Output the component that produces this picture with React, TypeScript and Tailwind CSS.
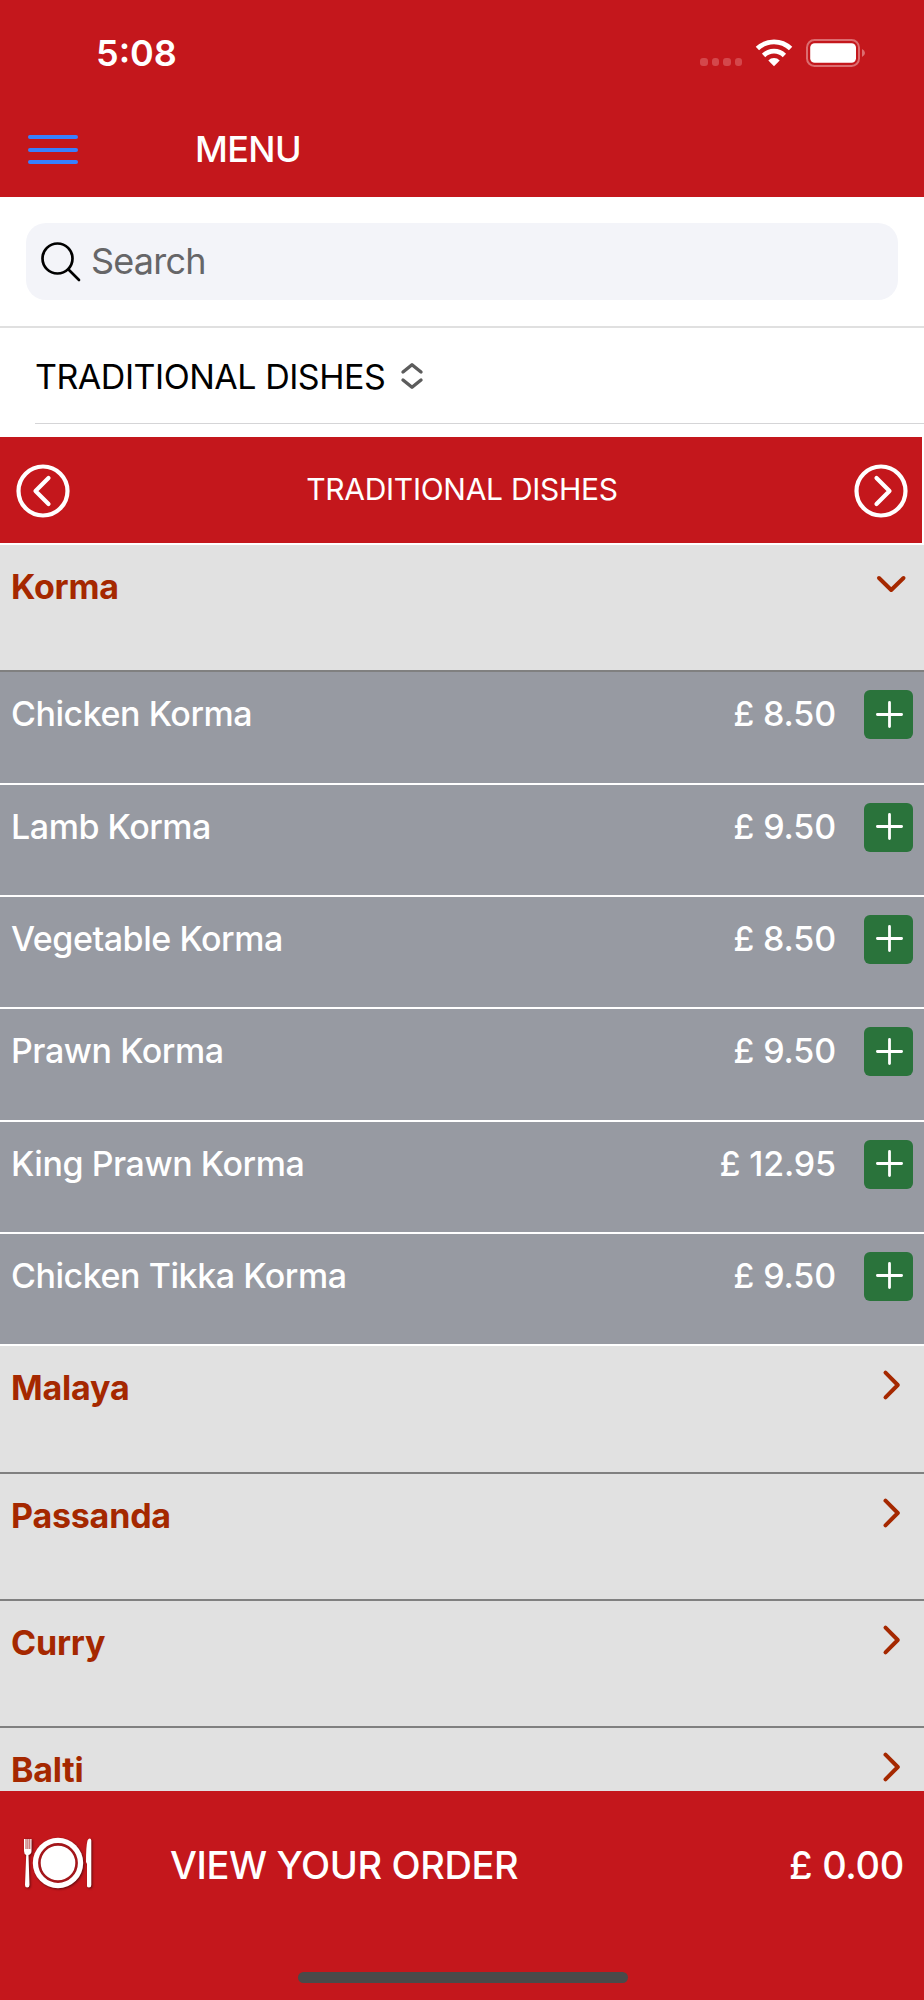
import { useState } from "react";

type Dish = { name: string; price: string };
type Category = { name: string; dishes: Dish[] };

const categories: Category[] = [
    {
        name: "Korma",
        dishes: [
            { name: "Chicken Korma", price: "8.50" },
            { name: "Lamb Korma", price: "9.50" },
            { name: "Vegetable Korma", price: "8.50" },
            { name: "Prawn Korma", price: "9.50" },
            { name: "King Prawn Korma", price: "12.95" },
            { name: "Chicken Tikka Korma", price: "9.50" },
        ],
    },
    { name: "Malaya", dishes: [] },
    { name: "Passanda", dishes: [] },
    { name: "Curry", dishes: [] },
    { name: "Balti", dishes: [] },
];

export default function App() {
    const [opened, setOpened] = useState("Korma");
    const [total, setTotal] = useState(0);

    return (
        <div className="flex h-[2000px] w-[924px] flex-col overflow-hidden bg-white font-['Inter',sans-serif]">
            <StatusBar />

            {/* Header */}
            <header className="flex h-[91px] shrink-0 items-center bg-[#c4171c] pb-[4px] pl-7">
                <button aria-label="Open menu" className="flex w-[50px] flex-col gap-[8.5px]">
                    <span className="h-1 rounded-full bg-[#3880ff]" />
                    <span className="h-1 rounded-full bg-[#3880ff]" />
                    <span className="h-1 rounded-full bg-[#3880ff]" />
                </button>
                <h1 className="mb-0.5 ml-[117px] text-[36px] leading-none font-[550] tracking-[-0.6px] text-white">MENU</h1>
            </header>

            {/* Search */}
            <div className="h-[131px] shrink-0 border-b-2 border-[#e0e0e0] px-[26px] pt-[26px]">
                <label className="flex h-[77px] items-center gap-3 rounded-[20px] bg-[#f3f4f9] pl-[15px]">
                    <svg className="shrink-0" width="40" height="40" viewBox="0 0 40 40" fill="none" stroke="#000" strokeWidth="2.7" strokeLinecap="round">
                        <circle cx="16.5" cy="16.5" r="15" />
                        <path d="M27.5 27.5 38 38" />
                    </svg>
                    <input
                        placeholder="Search"
                        className="mb-px -ml-[2px] w-full bg-transparent text-[36px] tracking-[-0.8px] outline-none placeholder:text-[#666668]"
                    />
                </label>
            </div>

            {/* Section select */}
            <div className="h-[109px] shrink-0 pl-[35px]">
                <button className="flex h-[96px] w-full items-center border-b border-[#d5d5d7] pt-px text-[34px] tracking-[-0.48px] text-black">
                    TRADITIONAL DISHES
                    <svg className="ml-[15px]" width="24" height="30" viewBox="0 0 24 30" fill="none" stroke="#5c5c5c" strokeWidth="3.4" strokeLinecap="round" strokeLinejoin="round">
                        <path d="M3 11 12 3.7 21 11M3 19 12 26.3 21 19" />
                    </svg>
                </button>
            </div>

            <div className="mr-[2px] mb-[2px] flex h-[106px] shrink-0 items-center justify-between bg-[#c4171c] pt-0.5 pr-[12px] pl-[14px] text-white">
                <CircleArrow d="M34.5 16 21.5 29 34.5 42" />
                <span className="pb-1 text-[30px] tracking-[-0.28px]">TRADITIONAL DISHES</span>
                <CircleArrow d="M24.5 16 37.5 29 24.5 42" />
            </div>

            {/* Dish list */}
            <main className="min-h-0 flex-1 overflow-hidden">
                {categories.map((category) => (
                    <section key={category.name}>
                        <button
                            onClick={() => setOpened(opened === category.name ? "" : category.name)}
                            className="flex h-[127.4px] w-full items-start justify-between border-b-2 border-[#808080] bg-[#e1e1e1] pt-[18px] pr-[14px] pl-[11px] text-[#a52800]"
                        >
                            <span className="text-[34px] leading-[48px] font-bold tracking-[-0.2px]">{category.name}</span>
                            <svg width="38" height="42" viewBox="0 0 38 42" fill="none" stroke="currentColor" strokeWidth="4" strokeLinecap="round" strokeLinejoin="round">
                                <path d={opened === category.name ? "M7 15 19.2 27 31.5 15" : "M13.5 8.7 25.8 21 13.5 33.3"} />
                            </svg>
                        </button>
                        {opened === category.name &&
                            category.dishes.map((dish) => (
                                <DishRow key={dish.name} dish={dish} onAdd={() => setTotal(total + Number(dish.price))} />
                            ))}
                    </section>
                ))}
            </main>

            {/* Order bar */}
            <footer className="flex h-[209.5px] shrink-0 flex-col items-center justify-between bg-[#c4171c] pb-[17px] text-white">
                <button className="flex w-full items-center pt-[42px] pr-5 pl-[22px] text-[38px]">
                    <PlateIcon />
                    <span className="mt-1 ml-[76px] font-[450] tracking-[-0.4px]">VIEW YOUR ORDER</span>
                    <span className="mt-1 ml-auto font-[450] tracking-[-0.3px]">£ {total.toFixed(2)}</span>
                </button>
                <div className="ml-px h-[11px] w-[330px] rounded-full bg-[#4a4a4a]" />
            </footer>
        </div>
    );
}

function DishRow({ dish, onAdd }: { dish: Dish; onAdd: () => void }) {
    return (
        <div className="flex h-[112.3px] items-start border-b-2 border-white bg-[#979aa2] pt-[18px] pr-[11px] pl-[11px] text-[34px] leading-[48px] font-[450] text-white">
            <span className="tracking-[-0.45px]">{dish.name}</span>
            <span className="ml-auto tracking-[-0.15px]">£ {dish.price}</span>
            <button onClick={onAdd} aria-label="Add" className="ml-[28px] flex size-[49px] items-center justify-center rounded-md bg-[#2a733b]">
                <svg className="mb-px ml-px" width="27" height="27" viewBox="0 0 27 27" stroke="#fff" strokeWidth="2.8" strokeLinecap="round">
                    <path d="M13.5 1.4V25.6M1.4 13.5H25.6" />
                </svg>
            </button>
        </div>
    );
}

function CircleArrow({ d }: { d: string }) {
    return (
        <svg width="58" height="58" viewBox="0 0 58 58" fill="none" stroke="#fff" strokeWidth="4.2" strokeLinecap="round" strokeLinejoin="round">
            <circle cx="29" cy="29" r="24.5" />
            <path d={d} />
        </svg>
    );
}

function StatusBar() {
    return (
        <div className="flex h-[106px] shrink-0 items-center bg-[#c4171c] pr-[58px] pl-24 text-white">
            <span className="text-[36px] leading-none font-[570]">5:08</span>
            <div className="mt-[18px] ml-auto flex gap-1">
                {[0, 1, 2, 3].map((i) => (
                    <span key={i} className="size-[7.5px] rounded-[3px] bg-[#d4474b]" />
                ))}
            </div>
            <svg className="mb-px ml-[13px]" width="38" height="28" viewBox="0 0 38 28" fill="none" stroke="#fff" strokeWidth="4.8">
                <path d="M2.4 9.6A24 24 0 0 1 35.6 9.6" />
                <path d="M8.6 16.4A15 15 0 0 1 29.4 16.4" />
                <path d="M13.3 21.4 19 27.3 24.7 21.4A8 8 0 0 0 13.3 21.4Z" fill="#fff" stroke="none" />
            </svg>
            <svg className="mb-px ml-[13px]" width="60" height="28" viewBox="0 0 60 28" fill="none">
                <rect x="1" y="1" width="52" height="26" rx="7.5" stroke="#dc6d70" strokeWidth="2" />
                <rect x="4.2" y="4.2" width="45.8" height="19.6" rx="4.5" fill="#fff" />
                <path d="M56 10Q59 11.500 59 14T56 18Z" fill="#dc6d70" />
            </svg>
        </div>
    );
}

function PlateIcon() {
    return (
        <svg className="drop-shadow-[1px_1px_1px_rgba(0,0,0,0.5)]" width="72" height="54" viewBox="0 0 72 54">
            <circle cx="36" cy="27" r="25.2" fill="#fff" />
            <circle cx="36" cy="27" r="18.6" fill="none" stroke="#a3161a" strokeWidth="2.6" />
            <path d="M2 3V15Q2 18 4.200 19L3 49Q3 51.500 5.200 51.500T7.500 49L6.500 19Q9.500 18 9.500 15V3" fill="#fff" />
            <path d="M4 2V13M5.900 2V13M7.800 2V13" stroke="#a3161a" strokeWidth="0.8" />
            <path d="M69.300 4.500V49Q69.300 51.500 67 51.500T65 49V28L64 26Q64 10 65.500 4.500Q66.500 2.500 67.800 2.500T69.300 4.500Z" fill="#fff" />
        </svg>
    );
}
